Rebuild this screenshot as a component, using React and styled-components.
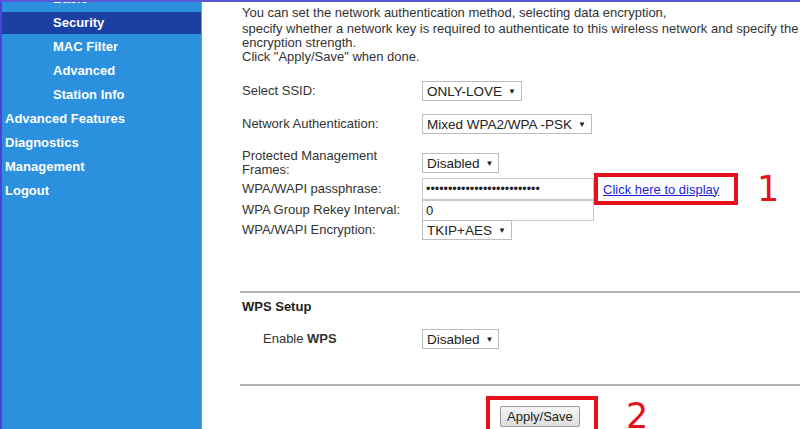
import styled, { createGlobalStyle } from "styled-components";

const GlobalStyle = createGlobalStyle`
  html, body {
    margin: 0;
    padding: 0;
    background: #fff;
  }
  body {
    font-family: "Liberation Sans", Arial, sans-serif;
  }
`;

const Page = styled.div`
  display: flex;
  width: 800px;
  height: 429px;
  overflow: hidden;
  border-top: 2px solid #5a58d6;
  box-sizing: border-box;
`;

// left menu
const Sidebar = styled.nav`
  flex: 0 0 199px;
  background: #2b90de;
  border-left: 2px solid #4a44d8;
  border-right: 1px solid #5aa6e6;
  overflow: hidden;
`;

const MenuList = styled.ul`
  list-style: none;
  margin: -15px 0 0;
  padding: 0;
`;

const MenuItem = styled.li`
  height: 24px;
  line-height: 24px;
  padding-left: ${(p) => (p.$sub ? "51px" : "3px")};
  color: #fff;
  font-size: 13px;
  font-weight: bold;
  white-space: nowrap;
  background: ${(p) => (p.$active ? "#1c3fa3" : "transparent")};
  ${(p) => p.$active && "margin: 1px 0; height: 22px; line-height: 22px;"}
`;

const Content = styled.main`
  flex: 1;
  padding: 4px 0 0 40px;
  color: #333;
  font-size: 13px;
  overflow: hidden;
`;

const Intro = styled.p`
  margin: 0;
  line-height: 14px;
  white-space: nowrap;
`;

const IntroLead = styled.span`
  display: block;
  margin-bottom: 2px;
`;

const Row = styled.div`
  display: grid;
  grid-template-columns: 180px auto;
  grid-template-rows: 100%;
  align-items: center;
  height: ${(p) => p.$h || 20}px;
  margin-top: ${(p) => p.$mt || 0}px;
`;

const Label = styled.span`
  line-height: 14px;
  white-space: nowrap;
  ${(p) => p.$indent && `padding-left: ${p.$indent}px;`}
`;

const Cell = styled.div`
  display: flex;
  align-items: center;
  height: 100%;
`;

const FakeSelect = styled.span`
  display: inline-flex;
  align-items: center;
  gap: 6px;
  height: 18px;
  padding: 0 5px 0 4px;
  border: 1px solid #bdbdbd;
  background: #fff;
  color: #222;
  font-size: 13.5px;
  white-space: nowrap;
`;

const Arrow = styled.span`
  font-size: 8px;
  color: #222;
`;

const TextBox = styled.div`
  box-sizing: border-box;
  flex: 0 0 172px;
  height: ${(p) => p.$h || 21}px;
  border: 1px solid #c8c8c8;
  padding: 0 3px;
  display: flex;
  align-items: center;
  color: #222;
  font-size: ${(p) => (p.$dots ? "12.5px" : "13px")};
  overflow: hidden;
  white-space: nowrap;
`;

const Highlight = styled.div`
  box-sizing: border-box;
  flex: 0 0 auto;
  border: 4px solid #e5121d;
  display: flex;
  align-items: ${(p) => (p.$top ? "flex-start" : "center")};
  padding: ${(p) => p.$pad};
  height: ${(p) => p.$h}px;
  width: ${(p) => p.$w}px;
`;

const Step = styled.span`
  color: #e5121d;
  font-size: 35px;
  font-family: "DejaVu Sans", "Liberation Sans", sans-serif;
  font-weight: normal;
  line-height: 1;
  margin-left: ${(p) => p.$ml}px;
`;

const Link = styled.a`
  color: #1d1ddb;
  text-decoration: underline;
  font-size: 13px;
  white-space: nowrap;
`;

const Separator = styled.hr`
  border: none;
  border-top: 2px solid #b4b4b4;
  margin: ${(p) => p.$mt}px 0 0 -2px;
`;

const Heading = styled.div`
  font-weight: bold;
  color: #222;
  line-height: 14px;
  margin-top: ${(p) => p.$mt}px;
`;

const ButtonRow = styled.div`
  display: flex;
  align-items: center;
  margin: 10px 0 0 244px;
`;

const Button = styled.button`
  font-family: "Liberation Sans", Arial, sans-serif;
  font-size: 13px;
  color: #222;
  height: 21px;
  padding: 0 6px;
  border: 1px solid #9a9a9a;
  border-radius: 2px;
  background: linear-gradient(#f6f6f6, #dedede);
`;

const Dropdown = ({ value }) => (
  <FakeSelect>
    {value}
    <Arrow>▼</Arrow>
  </FakeSelect>
);

const menu = [
  { name: "Basic", sub: true },
  { name: "Security", sub: true, active: true },
  { name: "MAC Filter", sub: true },
  { name: "Advanced", sub: true },
  { name: "Station Info", sub: true },
  { name: "Advanced Features" },
  { name: "Diagnostics" },
  { name: "Management" },
  { name: "Logout" },
];

export default function App() {
  return (
    <>
      <GlobalStyle />
      <Page>
        <Sidebar>
          <MenuList>
            {menu.map((m) => (
              <MenuItem key={m.name} $sub={m.sub} $active={m.active}>
                {m.name}
              </MenuItem>
            ))}
          </MenuList>
        </Sidebar>

        <Content>
          <Intro>
            <IntroLead>
              You can set the network authentication method, selecting data encryption,
            </IntroLead>
            specify whether a network key is required to authenticate to this wireless network and specify the
            <br />
            encryption strength.
            <br />
            Click "Apply/Save" when done.
          </Intro>

          <Row $mt={17}>
            <Label>Select SSID:</Label>
            <Cell>
              <Dropdown value="ONLY-LOVE" />
            </Cell>
          </Row>

          <Row $mt={13}>
            <Label>Network Authentication:</Label>
            <Cell>
              <Dropdown value="Mixed WPA2/WPA -PSK" />
            </Cell>
          </Row>

          <Row $mt={15} $h={28}>
            <Label>
              Protected Management
              <br />
              Frames:
            </Label>
            <Cell>
              <Dropdown value="Disabled" />
            </Cell>
          </Row>

          <Row $mt={1} $h={22}>
            <Label>WPA/WAPI passphrase:</Label>
            <Cell>
              <TextBox $dots $h={22}>
                {"•".repeat(26)}
              </TextBox>
              <Highlight $w={144} $h={32} $pad="0 0 0 5px">
                <Link href="#">Click here to display</Link>
              </Highlight>
              <Step $ml={19}>1</Step>
            </Cell>
          </Row>

          <Row $h={20}>
            <Label>WPA Group Rekey Interval:</Label>
            <Cell>
              <TextBox $h={21}>0</TextBox>
            </Cell>
          </Row>

          <Row>
            <Label>WPA/WAPI Encryption:</Label>
            <Cell>
              <Dropdown value="TKIP+AES" />
            </Cell>
          </Row>

          <Separator $mt={51} />

          <Heading $mt={7}>WPS Setup</Heading>

          <Row $mt={15}>
            <Label $indent={21}>
              Enable <b>WPS</b>
            </Label>
            <Cell>
              <Dropdown value="Disabled" />
            </Cell>
          </Row>

          <Separator $mt={35} />

          <ButtonRow>
            <Highlight $top $w={112} $h={40} $pad="6px 0 0 10px">
              <Button>Apply/Save</Button>
            </Highlight>
            <Step $ml={28}>2</Step>
          </ButtonRow>
        </Content>
      </Page>
    </>
  );
}
